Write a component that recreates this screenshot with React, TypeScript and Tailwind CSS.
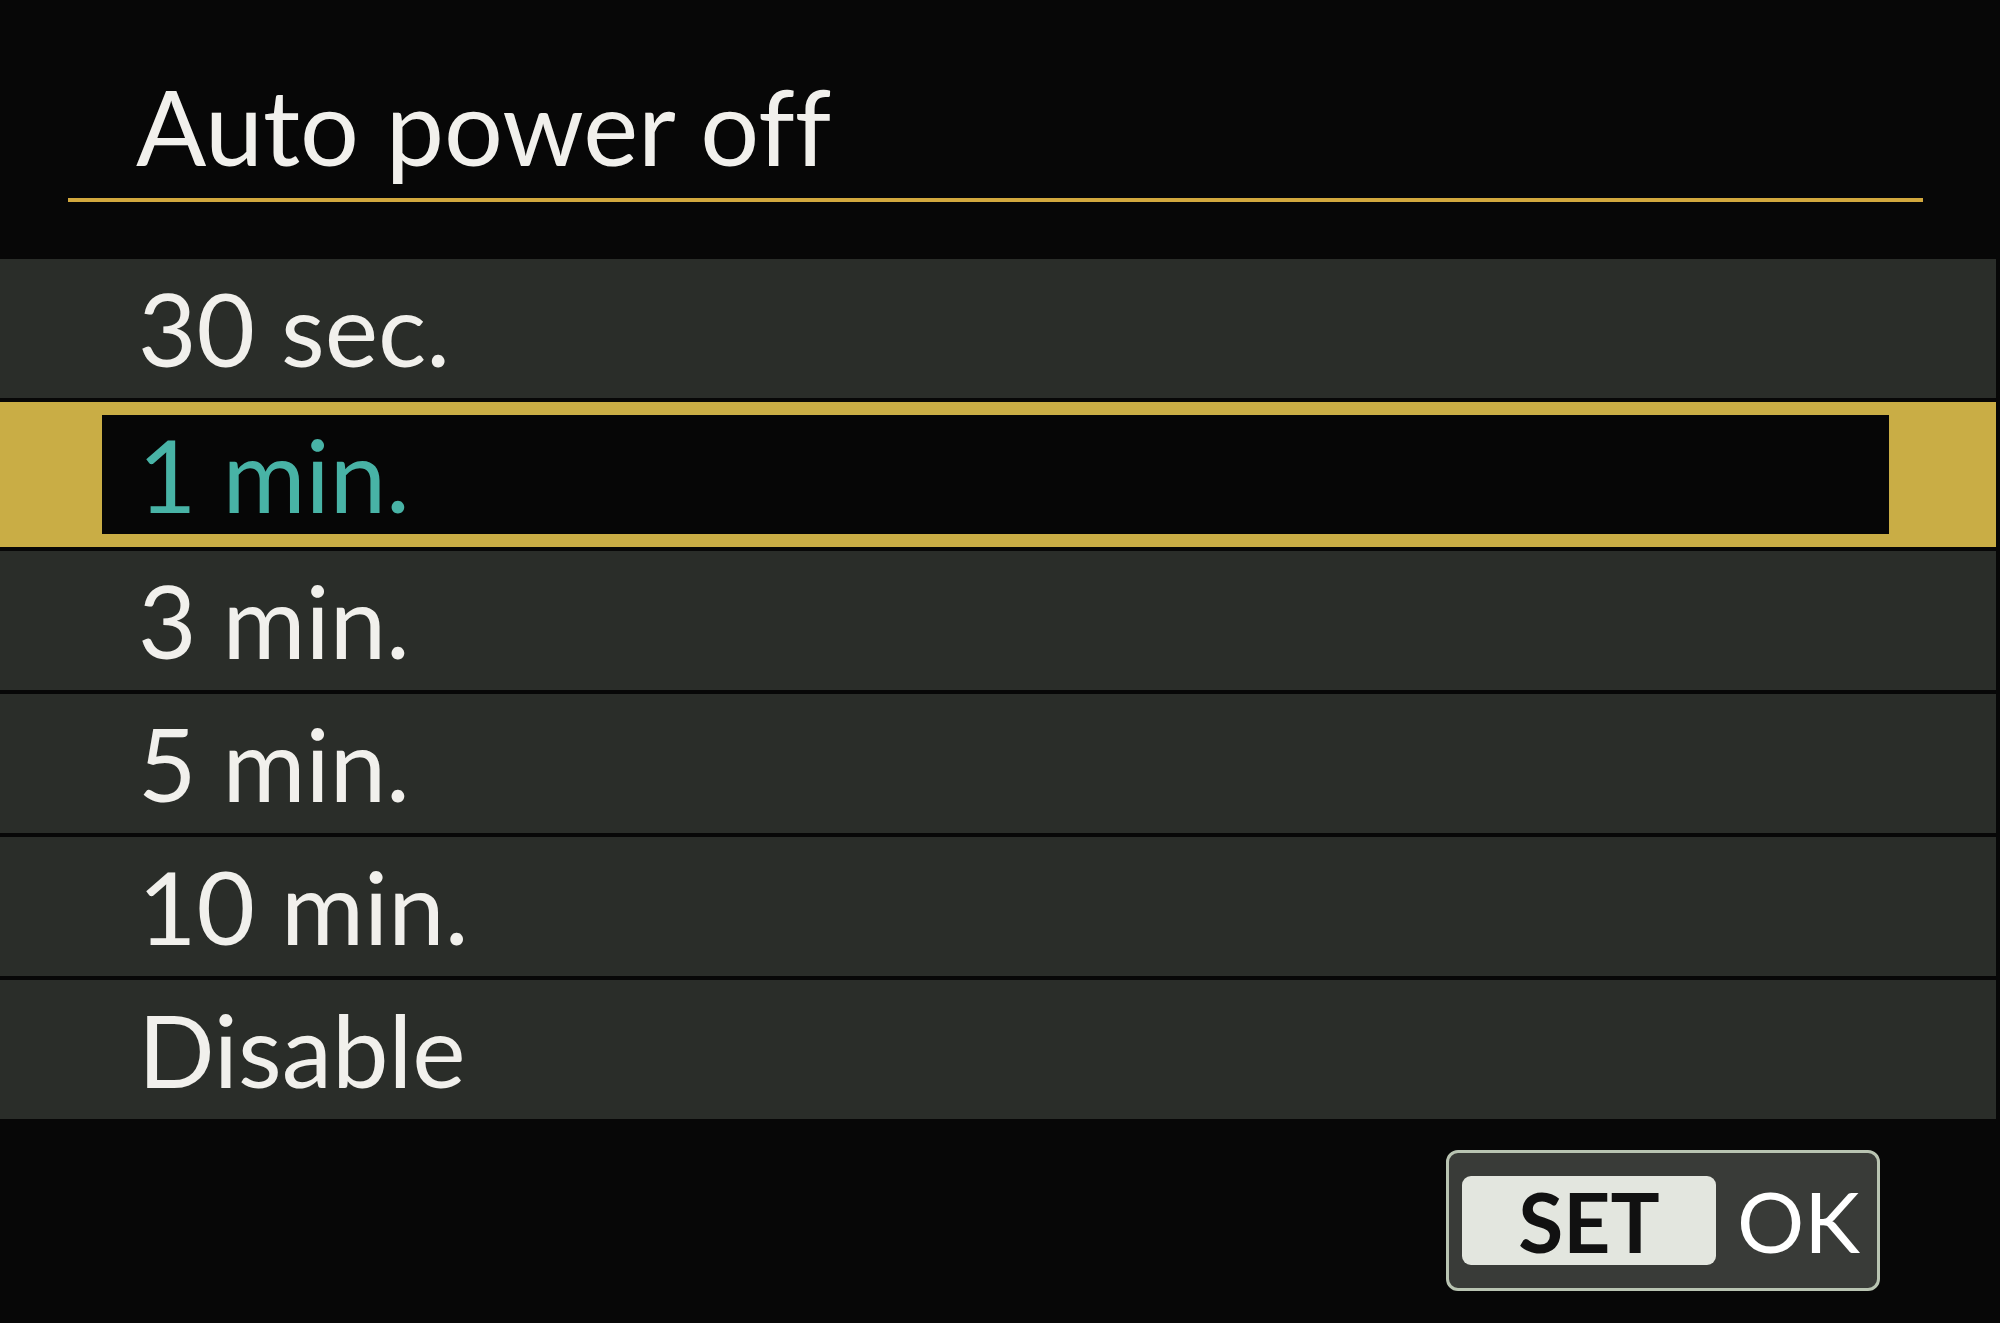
import React from 'react';

const options = ['30 sec.', '1 min.', '3 min.', '5 min.', '10 min.', 'Disable'];
const selected = 1;

export default function App() {
  return (
    <div className="w-[2000px] h-[1323px] bg-[#070707] flex flex-col overflow-hidden font-['Lato','Open_Sans',sans-serif] [font-variant-ligatures:none] text-[#f1f0ec]">
      {/* Title */}
      <div className="h-[259px] flex flex-col">
        <div className="pt-[74px] pl-[136px] text-[104px] leading-none">Auto power off</div>
        <div className="mt-[20px] ml-[68px] w-[1855px] h-[4px] bg-[#d2a83e]" />
      </div>

      {/* Options */}
      <div className="flex flex-col gap-[4px] pr-[4px]">
        {options.map((label, i) =>
          i === selected ? (
            <div key={label} className="h-[145px] bg-[#c9ad45] pl-[102px] pr-[107px] py-[13px] flex">
              <div className="flex-1 bg-[#060606] flex items-center pl-[36px]">
                <span className="text-[101px] leading-none text-[#48b3a6]">{label}</span>
              </div>
            </div>
          ) : (
            <div key={label} className="h-[139px] bg-[#2a2d29] flex items-center pl-[138px]">
              <span className="text-[101px] leading-none">{label}</span>
            </div>
          )
        )}
      </div>

      {/* SET OK */}
      <div className="flex-1 flex justify-end items-start pt-[31px] pr-[120px]">
        <div className="w-[434px] h-[141px] border-[3px] border-[#b9c4b2] rounded-[12px] bg-[#393b38] flex items-center pl-[13px] gap-[21px]">
          <div className="w-[254px] h-[89px] rounded-[9px] bg-[#e3e6df] flex items-center justify-center">
            <span className="text-[82px] leading-none font-bold text-[#111]">SET</span>
          </div>
          <span className="text-[84px] leading-none text-white">OK</span>
        </div>
      </div>
    </div>
  );
}
